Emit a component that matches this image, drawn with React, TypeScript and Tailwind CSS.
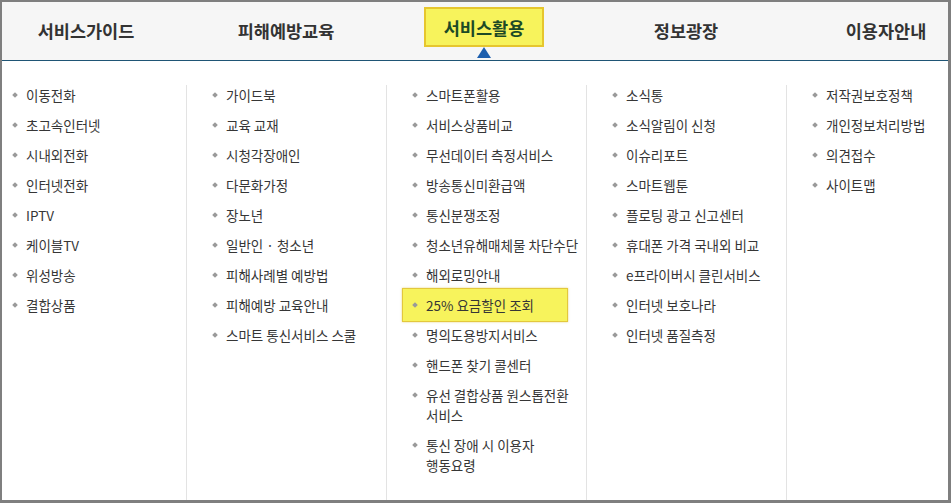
import React from "react";

type Item = { label: React.ReactNode; active?: boolean };

const menus: string[] = ["서비스가이드", "피해예방교육", "서비스활용", "정보광장", "이용자안내"];

const columns: Item[][] = [
    [
        { label: "이동전화" },
        { label: "초고속인터넷" },
        { label: "시내외전화" },
        { label: "인터넷전화" },
        { label: "IPTV" },
        { label: "케이블TV" },
        { label: "위성방송" },
        { label: "결합상품" },
    ],
    [
        { label: "가이드북" },
        { label: "교육 교재" },
        { label: "시청각장애인" },
        { label: "다문화가정" },
        { label: "장노년" },
        { label: "일반인 · 청소년" },
        { label: "피해사례별 예방법" },
        { label: "피해예방 교육안내" },
        { label: "스마트 통신서비스 스쿨" },
    ],
    [
        { label: "스마트폰활용" },
        { label: "서비스상품비교" },
        { label: "무선데이터 측정서비스" },
        { label: "방송통신미환급액" },
        { label: "통신분쟁조정" },
        { label: "청소년유해매체물 차단수단" },
        { label: "해외로밍안내" },
        { label: "25% 요금할인 조회", active: true },
        { label: "명의도용방지서비스" },
        { label: "핸드폰 찾기 콜센터" },
        { label: <>유선 결합상품 원스톱전환<br />서비스</> },
        { label: <>통신 장애 시 이용자<br />행동요령</> },
    ],
    [
        { label: "소식통" },
        { label: "소식알림이 신청" },
        { label: "이슈리포트" },
        { label: "스마트웹툰" },
        { label: "플로팅 광고 신고센터" },
        { label: "휴대폰 가격 국내외 비교" },
        { label: "e프라이버시 클린서비스" },
        { label: "인터넷 보호나라" },
        { label: "인터넷 품질측정" },
    ],
    [
        { label: "저작권보호정책" },
        { label: "개인정보처리방법" },
        { label: "의견접수" },
        { label: "사이트맵" },
    ],
];

function MenuItem({ item }: { item: Item }) {
    // highlighted entry gets a yellow box that bleeds out past the row
    const base = "flex items-start gap-[9px] leading-[20px] whitespace-nowrap";
    if (item.active) {
        return (
            <li
                className={`${base} w-[166px] -ml-[11px] pl-[10px] mt-[-7px] mb-[3px] py-[6px] bg-[#f7f35c] border border-[#e3c83c] shadow-[0_0_2px_rgba(200,170,0,0.5)]`}
            >
                <span className="mt-[8px] w-[4px] h-[4px] shrink-0 rotate-45 bg-[#9a9a9a]" />
                <span>{item.label}</span>
            </li>
        );
    }
    return (
        <li className={`${base} mb-[10px]`}>
            <span className="mt-[8px] w-[4px] h-[4px] shrink-0 rotate-45 bg-[#9a9a9a]" />
            <span>{item.label}</span>
        </li>
    );
}

export default function App() {
    return (
        <div
            className="w-[951px] h-[503px] overflow-hidden flex flex-col bg-white border-t-2 border-l-2 border-r-[3px] border-b-[3px] border-[#7f7f7f]"
            style={{ fontFamily: '"Noto Sans CJK KR", "Noto Sans", sans-serif' }}
        >
            {/* top menu bar */}
            <div className="h-[59px] shrink-0 bg-[#f6f6f6] border-b border-[#1f5575]">
                <div className="flex h-full -ml-[16px]">
                    {menus.map((m, i) => (
                        <div key={m} className="w-[200px] shrink-0 flex items-center justify-center">
                            {i === 2 ? (
                                <span className="relative -ml-[4px] mt-[-8px] h-[40px] px-[18px] pt-[3px] flex items-center bg-[#f7f35c] border-2 border-[#e6c62e] text-[17.5px] font-bold text-[#1c4a26]">
                                    {m}
                                    <span className="absolute left-1/2 top-full mt-[2px] -translate-x-1/2 w-0 h-0 border-l-[7px] border-r-[7px] border-b-[11px] border-l-transparent border-r-transparent border-b-[#1d5fae]" />
                                </span>
                            ) : (
                                <span className="text-[17.5px] font-bold text-[#333]">{m}</span>
                            )}
                        </div>
                    ))}
                </div>
            </div>

            {/* sub menus */}
            <div className="flex-1 flex pt-[24px] -ml-[15px] text-[13.5px] text-[#363636]">
                {columns.map((col, i) => (
                    <ul
                        key={i}
                        className={`w-[200px] shrink-0 pl-[26px] ${i < columns.length - 1 ? "border-r border-[#e3e3e3]" : ""}`}
                    >
                        {col.map((item, j) => (
                            <MenuItem key={j} item={item} />
                        ))}
                    </ul>
                ))}
            </div>
        </div>
    );
}
